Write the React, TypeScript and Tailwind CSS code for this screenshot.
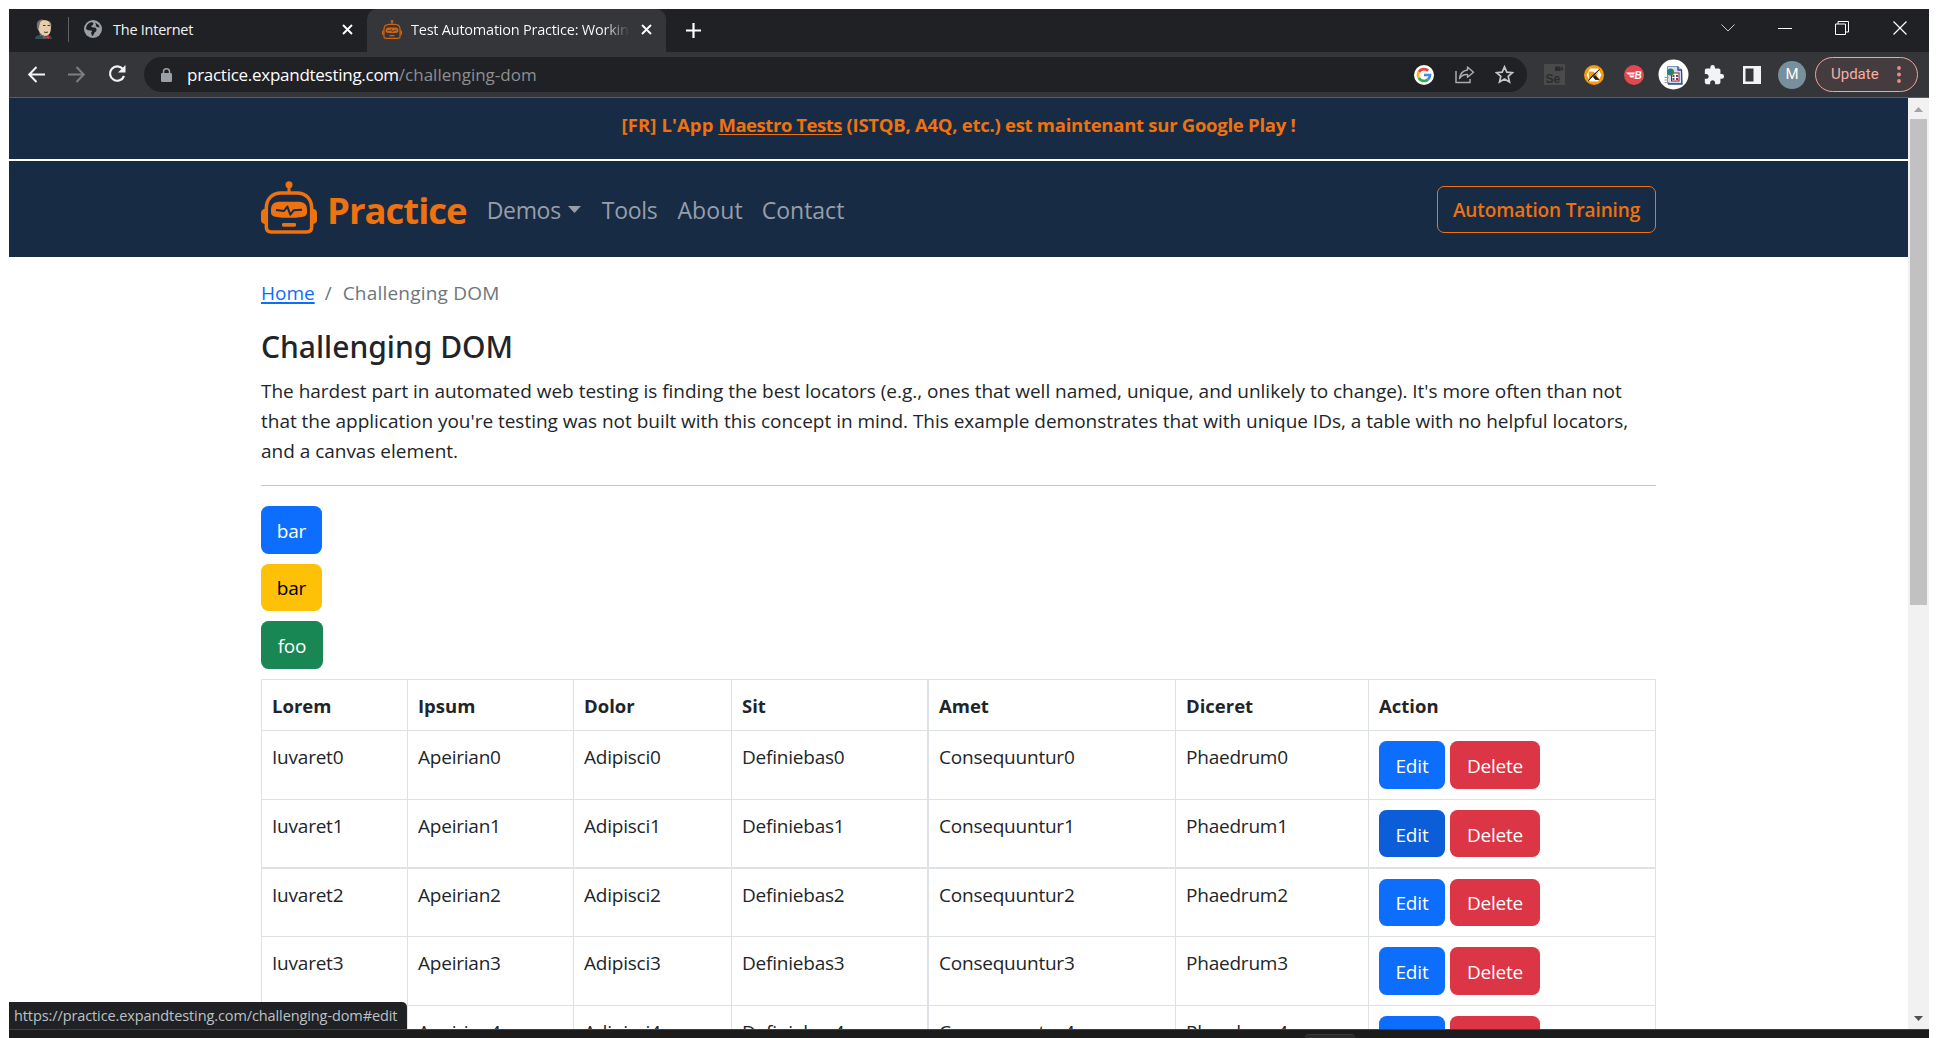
import type { ReactNode } from "react";

function Robot({ className, line }: { className: string; line: string }) {
  return (
    <svg viewBox="0 0 168 159" preserveAspectRatio="none" className={className} fill="none">
      <circle cx="84" cy="11" r="10.5" fill="currentColor" />
      <path d="M84 15v20" stroke="currentColor" strokeWidth="9" />
      <path
        d="M60 36H108C136 36 152 56 152 82V138Q152 153 137 153H31Q16 153 16 138V82C16 56 32 36 60 36Z"
        stroke="currentColor"
        strokeWidth="10.5"
      />
      <path d="M12 83Q0 85 0 96V116Q0 127 12 129ZM156 83Q168 85 168 96V116Q168 127 156 129Z" fill="currentColor" />
      <path
        d="M52 62H116Q138 64 138 84V94Q138 106 126 107Q84 114 43 107Q30 106 30 94V84Q30 64 52 62Z"
        fill="currentColor"
      />
      <path d="M45 87L69 90L79 77L88 101L98 88L123 86" stroke={line} strokeWidth="6" strokeLinejoin="round" />
      <rect x="63" y="126" width="42" height="11" rx="4" fill="currentColor" />
    </svg>
  );
}

function CloseX() {
  return (
    <svg className="h-[11px] w-[11px] shrink-0" viewBox="0 0 11 11">
      <path d="M1 1L10 10M10 1L1 10" stroke="#fff" strokeWidth="1.9" />
    </svg>
  );
}

function TabStrip() {
  return (
    <div className="flex h-[43px] bg-[#202124]">
      <div className="flex w-[358px] items-center pb-[3px]">
        <svg className="ml-[26px] h-5 w-[18px]" viewBox="0 0 18 20">
          <path d="M0 20Q0 16.500 5 16H12Q17 16.500 17 20Z" fill="#335061" />
          <path d="M3 7Q3 1 9 1Q16 1 16 8Q16 17 10 17Q5 16 4 12Q2 10 3 7Z" fill="#e6cdb0" />
          <path d="M2 9Q0 1 8 0L5 3.500L3.500 11Z" fill="#77716d" />
          <path d="M14 2Q17 4 16 9L14.500 5Z" fill="#a39485" />
          <path d="M8 6.500h2.500M12.500 6.500h2.500M9 13q2 1 4 0" stroke="#49372a" strokeWidth="1" fill="none" />
          <path d="M4 12Q5 16 9 17L5 16.500Z" fill="#77716d" />
          <path d="M8 16.500l3 1.500 3-1.500v3.500l-3-1-3 1z" fill="#d33833" />
        </svg>
        <div className="ml-[15px] h-[25px] w-px bg-[#5f6063]" />
        <svg className="ml-[15px] h-[18px] w-[18px]" viewBox="0 0 18 18">
          <circle cx="9" cy="9" r="9" fill="#9aa0a6" />
          <path
            d="M2 9Q2 4 7 2.300Q9 2 9.500 3.500Q9 5.500 7 6Q8 8 11 7.500Q13.500 9 12 11.500Q10 12 10 14Q9 16 8 16Q7.500 13.500 7 12.500Q9 11 7 10.500Q3.500 10.500 2 9ZM11 2.500Q14.500 4 15.700 7.500L13 7Q11 6 12 4.500Z"
            fill="#202124"
          />
        </svg>
        <span className="ml-[11px] pt-px text-[14.5px] tracking-[-0.25px] text-[#f1f3f4]">The Internet</span>
        <div className="ml-auto mr-[14px] flex">
          <CloseX />
        </div>
      </div>
      <div className="flex w-[299px] items-center rounded-t-[10px] bg-[#35363a] pb-[3px]">
        <Robot className="ml-[15px] h-[19px] w-5 text-[#d0640f]" line="#35363a" />
        <span className="ml-[9px] w-[219px] overflow-hidden whitespace-nowrap bg-[linear-gradient(90deg,#fff_88%,#35363a)] bg-clip-text pt-px text-[14.5px] tracking-[-0.23px] text-transparent">
          Test Automation Practice: Workin
        </span>
        <div className="ml-[11px] flex">
          <CloseX />
        </div>
      </div>
      <svg className="ml-[20px] mt-[14px] h-[15px] w-[15px]" viewBox="0 0 15 15">
        <path d="M7.500 0V15M0 7.500H15" stroke="#fff" strokeWidth="2.200" />
      </svg>
      <div className="ml-auto mt-[12px] flex h-[14px] items-center">
        <svg className="h-[14px] w-[14px]" viewBox="0 0 14 14">
          <path d="M.5 3.500L7 10L13.500 3.500" stroke="#c8c9ca" fill="none" />
        </svg>
        <div className="ml-[43px] h-px w-[14px] bg-white" />
        <svg className="ml-[43px] h-[14px] w-[14px]" viewBox="0 0 14 14">
          <path d="M.5 3H10.500V13.500H.5ZM3 3V.5H13.500V11H10.500" stroke="#fff" fill="none" />
        </svg>
        <svg className="ml-[44px] mr-[22px] h-[14px] w-[14px]" viewBox="0 0 14 14">
          <path d="M.5 .5L13.500 13.500M13.500 .5L.5 13.500" stroke="#fff" strokeWidth="1.200" />
        </svg>
      </div>
    </div>
  );
}

function Extensions() {
  return (
    <>
      <svg className="ml-[17px] h-[21px] w-[21px]" viewBox="0 0 21 21">
        <rect width="21" height="21" fill="#4a4a4a" />
        <rect x="11" y="2.500" width="5.500" height="4.500" fill="#2b2c2e" />
        <path d="M16 4.700l3-2v4z" fill="#2b2c2e" />
        <text x="1.500" y="18.500" fontSize="12" fontWeight="700" fontFamily="Liberation Sans" fill="#2b2c2e">
          Se
        </text>
      </svg>
      <svg className="ml-[19px] h-5 w-5" viewBox="0 0 20 20">
        <circle cx="10" cy="10" r="10" fill="#f59a0c" />
        <path d="M6 3.500H14L17.500 10L14 16.500H6L2.500 10Z" fill="#fff" />
        <path d="M4.500 6.500H9L12 9L15.500 5.500L12.500 10.500L15 14.500H11L8.500 11.500L5 14Z" fill="#f59a0c" />
        <path d="M15.500 4.500L4.500 15.500L8 11ZM11 10.500L15 14.500H11.500L9.500 12Z" fill="#1d1d1d" stroke="#1d1d1d" strokeWidth=".8" />
      </svg>
      <svg className="ml-5 h-5 w-5" viewBox="0 0 20 20">
        <circle cx="10" cy="10" r="10" fill="#e34850" />
        <path d="M2 7.500H11L10 9.500H4M5 10.500H10.500L9.500 12.500H6.500" fill="#fff" />
        <text x="10.500" y="13.500" fontSize="10" fontWeight="700" fontStyle="italic" fontFamily="Liberation Sans" fill="#fff">
          B
        </text>
      </svg>
      <svg className="ml-[14px] h-[31px] w-[31px]" viewBox="0 0 31 31">
        <circle cx="15.500" cy="15.500" r="15" fill="#fff" />
        <path d="M9.500 7.500H20L23.500 11V24.500H9.500Z" fill="#d5dff0" stroke="#7f93b8" />
        <path d="M20 7.500V11H23.500L24 25H10" fill="none" stroke="#31497c" strokeWidth="1.300" />
        <rect x="13.500" y="14" width="7.500" height="8" fill="#fff" stroke="#8b1c2b" />
        <path d="M14.500 16h2v2h-2zM18 19h2v2h-2z" fill="#b3202f" />
        <path d="M18 16h2v2h-2zM14.500 19h2v2h-2z" fill="#2d57a8" />
        <circle cx="12.500" cy="13" r="3.600" fill="#2b8f3a" />
        <path d="M10 12.500Q12.500 9 14.500 12Q13 15.500 11 14.500Z" fill="#2c6fc2" />
        <path d="M6.500 18.500h4M6.500 21h3M6.500 23.500h5" stroke="#9a9a9a" />
      </svg>
      <svg className="ml-[14px] h-[22px] w-[22px]" viewBox="0 0 24 24" fill="#f1f3f4">
        <path d="M20.500 11H19V7c0-1.100-.9-2-2-2h-4V3.500a2.500 2.500 0 0 0-5 0V5H4c-1.100 0-1.990.9-1.990 2v3.800H3.500c1.490 0 2.700 1.210 2.700 2.700s-1.210 2.700-2.700 2.700H2V20c0 1.100.9 2 2 2h3.800v-1.500c0-1.490 1.210-2.700 2.700-2.700s2.700 1.210 2.700 2.700V22H17c1.100 0 2-.9 2-2v-4h1.500a2.500 2.500 0 0 0 0-5z" />
      </svg>
      <svg className="ml-[18px] h-[18px] w-[18px]" viewBox="0 0 18 18">
        <path d="M0 0H18V18H0ZM2.500 2.500V15.500H10.500V2.500Z" fill="#f1f3f4" fillRule="evenodd" />
      </svg>
      <div className="ml-[17px] flex h-7 w-7 items-center justify-center rounded-full bg-[#78909c] font-['Roboto'] text-[15px] text-white">
        M
      </div>
      <div className="ml-[9px] flex h-[35px] w-[103px] items-center rounded-full border border-[#f3a49b] bg-[#453c3f] pl-[15px] text-[#f6aea6]">
        <span className="font-['Roboto'] text-[15px] leading-none">Update</span>
        <svg className="ml-[18px] h-[17px] w-1" viewBox="0 0 4 17" fill="#f28b82">
          <circle cx="2" cy="2" r="1.900" />
          <circle cx="2" cy="8.500" r="1.900" />
          <circle cx="2" cy="15" r="1.900" />
        </svg>
      </div>
    </>
  );
}

function Toolbar() {
  return (
    <div className="flex h-[46px] items-center border-b border-[#5c5d60] bg-[#35363a]">
      <svg className="ml-[19px] h-[17px] w-[17px]" viewBox="0 0 17 17" fill="none" stroke="#f1f3f4" strokeWidth="2">
        <path d="M17 8.500H1.500M8.500 1L1.200 8.500L8.500 16" />
      </svg>
      <svg className="ml-[23px] h-[17px] w-[17px]" viewBox="0 0 17 17" fill="none" stroke="#7d7e81" strokeWidth="2">
        <path d="M0 8.500H15.500M8.500 1L15.800 8.500L8.500 16" />
      </svg>
      <svg className="ml-[23px] mb-px h-[18px] w-[18px]" viewBox="0 0 18 18">
        <path d="M15 4.200A7.200 7.200 0 1 0 16 11" fill="none" stroke="#f1f3f4" strokeWidth="2.200" />
        <path d="M17.500 0V7.500H10Z" fill="#f1f3f4" />
      </svg>
      <div className="ml-[18px] flex h-[35px] w-[1383px] items-center rounded-full bg-[#202124] pl-[17px]">
        <svg className="h-[14px] w-[11px]" viewBox="0 0 11 14">
          <rect y="5" width="11" height="9" rx="1.200" fill="#9aa0a6" />
          <path d="M2.500 5.500V3.800a3 3 0 0 1 6 0V5.500" fill="none" stroke="#9aa0a6" strokeWidth="1.500" />
        </svg>
        <span className="ml-[15px] text-[17px] tracking-[-0.27px] text-white">practice.expandtesting.com</span>
        <span className="text-[17px] text-[#8c8f93]">/challenging-dom</span>
        <svg className="ml-auto h-5 w-5" viewBox="0 0 20 20">
          <circle cx="10" cy="10" r="10" fill="#fff" />
          <g fill="none" strokeWidth="2.700">
            <path d="M14.200 5.800A6 6 0 0 0 4.800 7" stroke="#ea4335" />
            <path d="M4.800 7A6 6 0 0 0 4.800 13" stroke="#fbbc05" />
            <path d="M4.800 13A6 6 0 0 0 13.800 14.600" stroke="#34a853" />
            <path d="M13.800 14.600A6 6 0 0 0 16 10H10" stroke="#4285f4" />
          </g>
        </svg>
        <svg className="ml-[21px] h-[19px] w-5" viewBox="0 0 20 19" fill="none" stroke="#a9abae" strokeWidth="1.500">
          <path d="M1 6V17.500H15V14" />
          <path d="M12.500 2L18.500 7.200L12.500 12.300V9.500Q7.500 9 4.500 13.500Q5.500 6 12.500 5Z" strokeLinejoin="round" />
        </svg>
        <svg className="ml-[20px] mr-[13px] h-[19px] w-[19px]" viewBox="0 0 19 19">
          <path
            d="M9.500 1.800L11.800 7.100L17.500 7.600L13.200 11.400L14.500 17L9.500 14L4.500 17L5.800 11.400L1.500 7.600L7.200 7.100Z"
            fill="none"
            stroke="#c3c5c8"
            strokeWidth="1.700"
          />
        </svg>
      </div>
      <Extensions />
    </div>
  );
}

function SiteHeader() {
  return (
    <header className="text-[#ee720f]">
      <div className="h-[61px] bg-[#182b44] pt-[12px] text-center text-[18.5px] font-bold leading-[30px] tracking-[-0.27px]">
        <span className="tracking-[0.1px]">[FR] L'App </span>
        <a className="tracking-[-0.45px] underline decoration-1 underline-offset-2">Maestro Tests</a> (ISTQB, A4Q, etc.) est
        maintenant sur Google Play !
      </div>
      <nav className="mt-[2px] flex h-[96px] items-center bg-[#182b44] pl-[252px] pr-[252px] text-[23px] text-[#979eaa]">
        <Robot className="mb-[3px] h-[53px] w-14 text-[#ee720f]" line="#182b44" />
        <span className="ml-[10px] pt-[3px] text-[36.5px] font-bold leading-none tracking-[-1px] text-[#ee720f]">Practice</span>
        <span className="ml-[20px] pt-[3px] tracking-[-0.3px]">Demos</span>
        <svg className="ml-[7px] h-[7px] w-[13px]" viewBox="0 0 13 7">
          <path d="M0 0H13L6.500 7Z" fill="#979eaa" />
        </svg>
        <span className="ml-[21px] pt-[3px] tracking-[-0.3px]">Tools</span>
        <span className="ml-[20px] pt-[3px] tracking-[0.1px]">About</span>
        <span className="ml-[19px] pt-[3px]">Contact</span>
        <a className="ml-auto flex h-[47px] w-[219px] items-center justify-center rounded-[7px] border border-[#ee720f] pt-[2px] text-[19px] font-semibold tracking-[-0.12px] text-[#ee720f]">
          Automation Training
        </a>
      </nav>
    </header>
  );
}

function Btn({ children, className }: { children: ReactNode; className: string }) {
  return (
    <button className={`flex items-center justify-center rounded-[7.5px] leading-[30px] tracking-[-0.2px] ${className}`}>
      {children}
    </button>
  );
}

const HEADS = ["Lorem", "Ipsum", "Dolor", "Sit", "Amet", "Diceret", "Action"];
const WORDS = ["Iuvaret", "Apeirian", "Adipisci", "Definiebas", "Consequuntur", "Phaedrum"];
const GRID = "grid grid-cols-[146px_166px_158px_197px_247px_193px_287px]";
const ROWS = [
  { row: "h-[69px] border-b", size: "h-12 pt-[2px]", edit: "bg-[#0d6efd]" },
  { row: "h-[69px] border-b-2", size: "h-[47px] pt-[2px]", edit: "bg-[#0b5ed7]" },
  { row: "h-[68px] border-b", size: "h-[47px]", edit: "bg-[#0d6efd]" },
  { row: "h-[69px] border-b", size: "h-12 pt-[2px]", edit: "bg-[#0d6efd]" },
  { row: "h-[69px] border-b", size: "h-12 pt-[2px]", edit: "bg-[#0d6efd]" },
];

function cellClass(i: number) {
  return i === 3 ? "border-r-2 border-[#dee2e6] pl-[10px]" : "border-r border-[#dee2e6] pl-[10px]";
}

function DataTable() {
  return (
    <div className="mt-[10px] w-[1395px] border-l border-t border-[#dee2e6] leading-[30px] tracking-[-0.22px]">
      <div className={`${GRID} h-[51px] border-b border-[#dee2e6] text-[18.5px] font-bold tracking-[0px]`}>
        {HEADS.map((h, i) => (
          <div key={h} className={`${cellClass(i)} pt-[11px]`}>
            {h}
          </div>
        ))}
      </div>
      {ROWS.map((r, n) => (
        <div key={n} className={`${GRID} ${r.row} border-[#dee2e6]`}>
          {WORDS.map((w, i) => (
            <div key={w} className={`${cellClass(i)} pt-[11px]`}>
              {w + n}
            </div>
          ))}
          <div className="flex items-start gap-[5px] border-r border-[#dee2e6] pl-[10px] pt-[10px] text-white">
            <Btn className={`w-[66px] ${r.size} ${r.edit}`}>Edit</Btn>
            <Btn className={`w-[90px] ${r.size} bg-[#dc3545]`}>Delete</Btn>
          </div>
        </div>
      ))}
    </div>
  );
}

function Scrollbar() {
  return (
    <div className="flex w-[21px] flex-col items-center bg-[#f1f1f1]">
      <svg className="mt-[9px] h-[5px] w-[9px] shrink-0" viewBox="0 0 9 5">
        <path d="M4.500 0L9 5H0Z" fill="#a3a3a3" />
      </svg>
      <div className="mt-[7px] h-[486px] w-[17px] bg-[#c1c1c1]" />
      <svg className="mb-[8px] mt-auto h-[5px] w-[9px]" viewBox="0 0 9 5">
        <path d="M0 0H9L4.500 5Z" fill="#505050" />
      </svg>
    </div>
  );
}

export default function App() {
  return (
    <div className="h-[1038px] w-[1938px] overflow-hidden bg-white pl-[9px] pr-[9px] pt-[9px] font-['Open_Sans','Noto_Sans',sans-serif]">
      <TabStrip />
      <Toolbar />
      <div className="relative flex h-[931px] overflow-hidden">
        <div className="flex-1">
          <SiteHeader />
          <main className="pl-[252px] text-[19px] text-[#212529]">
            <div className="flex pt-[21px] leading-[30px]">
              <a className="text-[#0d6efd] underline decoration-2 underline-offset-2">Home</a>
              <span className="ml-[10px] text-[#6c757d]">/</span>
              <span className="ml-[11px] tracking-[0.2px] text-[#6c757d]">Challenging DOM</span>
            </div>
            <h1 className="mt-[21px] h-9 font-['Noto_Sans'] text-[30px] font-medium leading-9">Challenging DOM</h1>
            <p className="mt-[11px] whitespace-nowrap leading-[30px] tracking-[-0.02px]">
              The hardest part in automated web testing is finding the best locators (e.g., ones that well named, unique, and
              unlikely to change). It's more often than not
              <br />
              that the application you're testing was not built with this concept in mind. This example demonstrates that with
              unique IDs, a table with no helpful locators,
              <br />
              and a canvas element.
            </p>
            <hr className="mt-[19px] w-[1395px] border-t border-[#c7c8c9]" />
            <div className="mt-5 flex flex-col gap-[10px]">
              <Btn className="h-12 w-[61px] bg-[#0d6efd] pt-[2px] text-white">bar</Btn>
              <Btn className="h-[47px] w-[61px] bg-[#ffc107] text-black">bar</Btn>
              <Btn className="h-12 w-[62px] bg-[#198754] pt-[2px] text-white">foo</Btn>
            </div>
            <DataTable />
          </main>
        </div>
        <Scrollbar />
        <div className="absolute bottom-0 left-0 flex h-[27px] w-[398px] items-center rounded-tr-[5px] bg-[#202124] pl-[5px] pt-px text-[14.5px] tracking-[-0.1px] text-[#bdc1c6]">
          https://practice.expandtesting.com/challenging-dom#edit
        </div>
      </div>
      <div className="h-[9px] border-t border-[#3f3f3d] bg-[#1c1c1c] pl-[1296px] pt-1">
        <div className="h-[5px] w-[50px] rounded-t-[4px] border-t border-[#3a3a3a] bg-[#2b2b2b]" />
      </div>
    </div>
  );
}
